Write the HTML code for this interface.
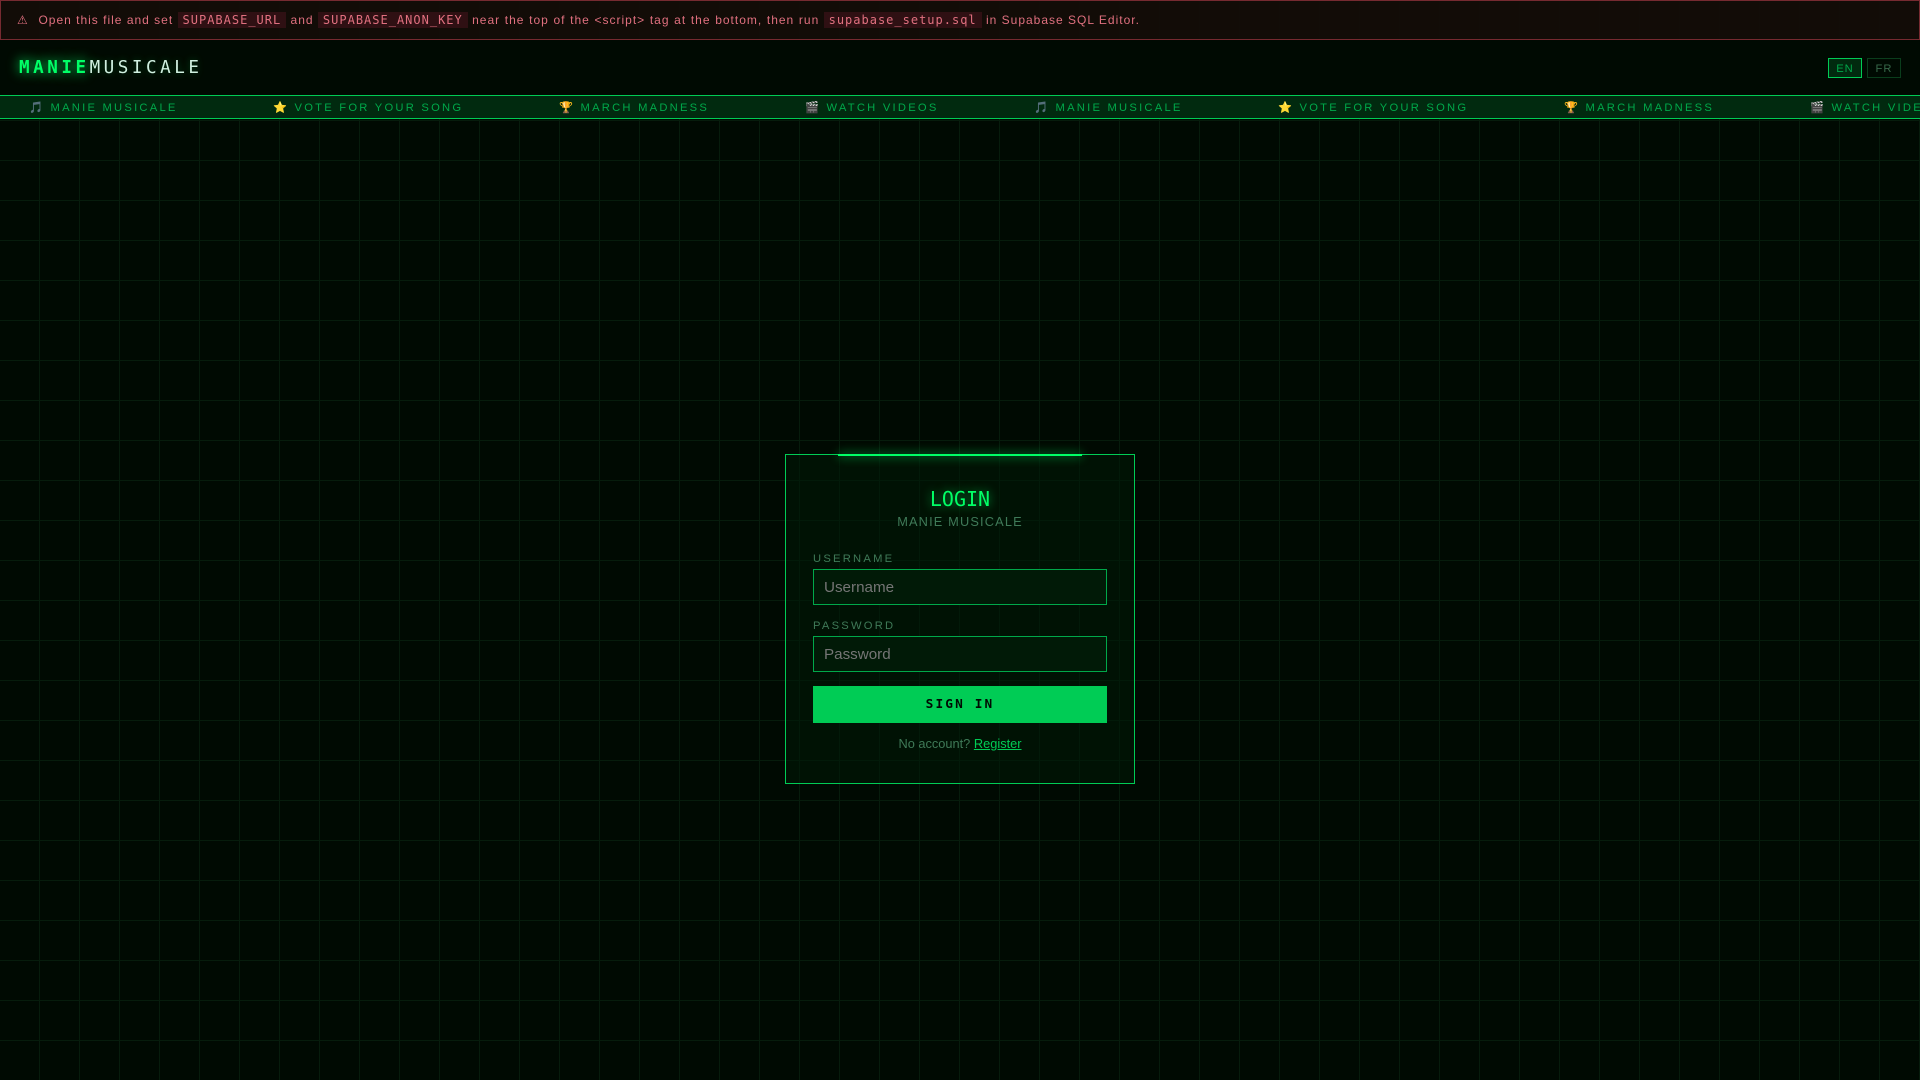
<!DOCTYPE html>
<html lang="en">
<head>
<meta charset="utf-8">
<title>Manie Musicale</title>
<style>
*{box-sizing:border-box;margin:0;padding:0}
html,body{width:1920px;height:1080px;overflow:hidden}
body{position:relative;background-color:#000a02;font-family:"Liberation Sans",sans-serif}
.grid{position:absolute;inset:0;background-image:linear-gradient(#061c0c 1px,transparent 1px),linear-gradient(90deg,transparent 39px,#061c0c 39px,#061c0c 40px,transparent 40px);background-size:40px 40px}
.head{position:absolute;left:0;top:40px;width:1920px;height:55px;background:#000a02}
.banner{position:absolute;left:0;top:0;width:1920px;height:40px;background:rgba(20,12,8,.9);border:1px solid #762a30;color:#e0707f;font-size:12px;letter-spacing:1px;line-height:38px;padding-left:16px;white-space:pre}
.banner code{font-family:"DejaVu Sans Mono",monospace;font-size:12px;letter-spacing:1px;background:#2f1013;padding:1px 5px;color:#e0707f}
.banner i{font-style:normal;word-spacing:.33px}
.banner u{text-decoration:none;margin-left:1px}
.logo{position:absolute;left:19px;top:56px;font-family:"DejaVu Sans Mono",monospace;font-size:17.6px;line-height:25px;letter-spacing:3.52px;color:#d0f0e0;white-space:pre;text-shadow:0 0 8px rgba(0,255,102,.3)}
.logo b{color:#00ff66;text-shadow:0 0 12px #00ff66}
.lang{position:absolute;top:58px;width:34px;height:20px;border:1px solid #00cc55;font-size:11.2px;line-height:20px;letter-spacing:1px;text-align:center;color:#00a84a;background:#012a0f}
.lang.fr{border-color:#0a3d1c;color:#37694a;background:transparent}
.ticker{position:absolute;left:0;top:95px;width:1920px;height:24px;background:#012a0f;border-top:1px solid #00cc55;border-bottom:1px solid #00cc55;overflow:hidden}
.ticker span{position:absolute;top:0;line-height:24px;font-size:11.2px;letter-spacing:2.24px;color:#00a84a;white-space:pre}
.card{position:absolute;left:785px;top:454px;width:350px;height:330px;background:rgba(0,26,8,.55);border:1px solid #00cc55}
.strip{position:absolute;left:838px;top:454px;width:244px;height:2px;background:#00ff66;box-shadow:0 0 10px #00ff66}
.t{position:absolute;text-align:center;left:785px;width:350px;white-space:pre}
.login{top:487px;font-family:"DejaVu Sans Mono",monospace;font-size:20px;line-height:24px;color:#00ff66;text-shadow:0 0 10px rgba(0,255,102,.6)}
.sub{top:514px;font-size:12.8px;line-height:16px;letter-spacing:1.15px;color:#3f7a58}
.lbl{position:absolute;left:813px;font-size:11.2px;line-height:14px;letter-spacing:2.24px;color:#3f7a58;white-space:pre}
.input{position:absolute;left:813px;width:294px;height:36px;background:#011a07;border:1px solid #00a84a;color:#757575;font-size:15.2px;line-height:35px;padding-left:10px}
.btn{position:absolute;left:813px;top:686px;width:294px;height:37px;background:#00cc55;color:#010a03;font-family:"DejaVu Sans Mono",monospace;font-weight:bold;font-size:12.8px;letter-spacing:2.1px;line-height:38px;text-align:center}
.reg{top:736px;font-size:12.8px;line-height:16px;color:#3f7a58}
.reg a{color:#00cc55;text-decoration:underline}
</style>
</head>
<body>
<div class="grid"></div>
<div class="head"></div>
<div class="banner">⚠  <u>Open</u> this file and set <code>SUPABASE_URL</code> and <code>SUPABASE_ANON_KEY</code> <i>near the top of the &lt;script&gt; tag at the bottom, then run</i> <code>supabase_setup.sql</code> in Supabase SQL Editor.</div>
<div class="logo"><b>MANIE</b>MUSICALE</div>
<div class="lang" style="left:1828px">EN</div>
<div class="lang fr" style="left:1867px">FR</div>
<div class="ticker">
<span style="left:29px">🎵 MANIE MUSICALE</span>
<span style="left:273px">⭐ VOTE FOR YOUR SONG</span>
<span style="left:559px">🏆 MARCH MADNESS</span>
<span style="left:805px">🎬 WATCH VIDEOS</span>
<span style="left:1034px">🎵 MANIE MUSICALE</span>
<span style="left:1278px">⭐ VOTE FOR YOUR SONG</span>
<span style="left:1564px">🏆 MARCH MADNESS</span>
<span style="left:1810px">🎬 WATCH VIDEOS</span>
</div>
<div class="card"></div>
<div class="strip"></div>
<div class="t login">LOGIN</div>
<div class="t sub">MANIE MUSICALE</div>
<div class="lbl" style="top:552px">USERNAME</div>
<div class="input" style="top:569px">Username</div>
<div class="lbl" style="top:619px">PASSWORD</div>
<div class="input" style="top:636px">Password</div>
<div class="btn">SIGN IN</div>
<div class="t reg">No account? <a>Register</a></div>
</body>
</html>
